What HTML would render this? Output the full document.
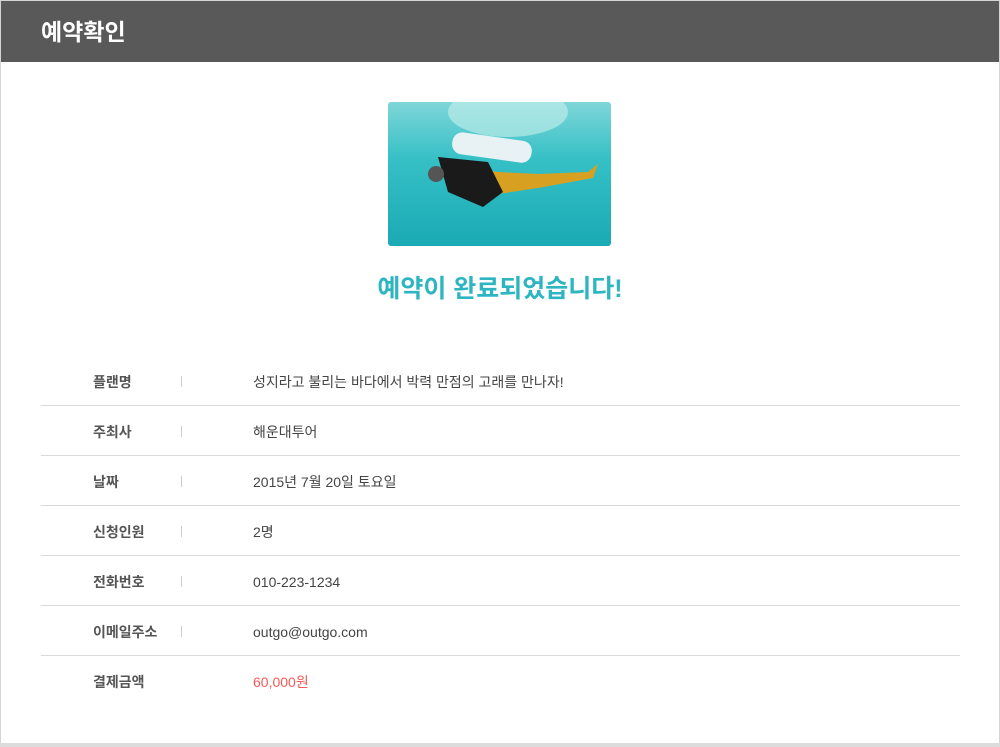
<!DOCTYPE html>
<html><head><meta charset="utf-8"><style>
*{margin:0;padding:0;box-sizing:border-box}
body{width:1000px;height:747px;background:#fff;font-family:"Liberation Sans","Noto Sans CJK KR",sans-serif;position:relative;overflow:hidden}
.frame{position:absolute;left:0;top:0;width:1000px;height:744px;border:1px solid #d4d4d4}
.bot{position:absolute;left:0;top:743px;width:1000px;height:4px;background:#dcdcdc}
.hd{position:absolute;left:1px;top:1px;width:998px;height:61px;background:#595959;color:#fff;font-size:23px;font-weight:bold;padding-left:40px;line-height:62px}
.img{position:absolute;left:388px;top:102px;width:223px;height:144px;border-radius:3px;overflow:hidden;background:linear-gradient(180deg,#7fd6d8 0%,#35c0c6 40%,#1aaab4 100%)}
.ttl{position:absolute;left:0;width:1000px;top:269px;text-align:center;color:#2db6c1;font-size:25px;font-weight:bold;letter-spacing:0}
.row{position:absolute;left:41px;width:919px;height:50px;border-bottom:1px solid #d9d9d9;font-size:14px;color:#444;line-height:52px}
.row .l{position:absolute;left:52px;color:#555;font-weight:bold}
.row .s{position:absolute;left:140px;top:20px;width:1px;height:11px;background:#ccc}
.row .v{position:absolute;left:212px}
</style></head><body>
<div class="frame"></div><div class="bot"></div>
<div class="hd">예약확인</div>
<div class="img"><svg width="223" height="144" viewBox="0 0 223 144">
<ellipse cx="120" cy="10" rx="60" ry="25" fill="#c8f0ec" opacity=".6"/>
<rect x="64" y="34" width="80" height="22" rx="10" fill="#e8f2f4" transform="rotate(8 100 45)"/>
<path d="M60 60 L110 70 L150 72 L200 70 L210 62 L205 76 L150 86 L110 92 L70 90 Z" fill="#d8a020"/>
<path d="M50 55 L100 60 L115 90 L95 105 L60 90 Z" fill="#1a1a1a"/>
<circle cx="48" cy="72" r="8" fill="#555"/>
</svg></div>
<div class="ttl">예약이 완료되었습니다!</div>
<div class="row" style="top:356px"><span class="l">플랜명</span><span class="s"></span><span class="v">성지라고 불리는 바다에서 박력 만점의 고래를 만나자!</span></div>
<div class="row" style="top:406px"><span class="l">주최사</span><span class="s"></span><span class="v">해운대투어</span></div>
<div class="row" style="top:456px"><span class="l">날짜</span><span class="s"></span><span class="v">2015년 7월 20일 토요일</span></div>
<div class="row" style="top:506px"><span class="l">신청인원</span><span class="s"></span><span class="v">2명</span></div>
<div class="row" style="top:556px"><span class="l">전화번호</span><span class="s"></span><span class="v">010-223-1234</span></div>
<div class="row" style="top:606px"><span class="l">이메일주소</span><span class="s"></span><span class="v">outgo@outgo.com</span></div>
<div class="row" style="top:656px;border-bottom:none"><span class="l">결제금액</span><span class="v" style="color:#f05a5a">60,000원</span></div>
</body></html>
